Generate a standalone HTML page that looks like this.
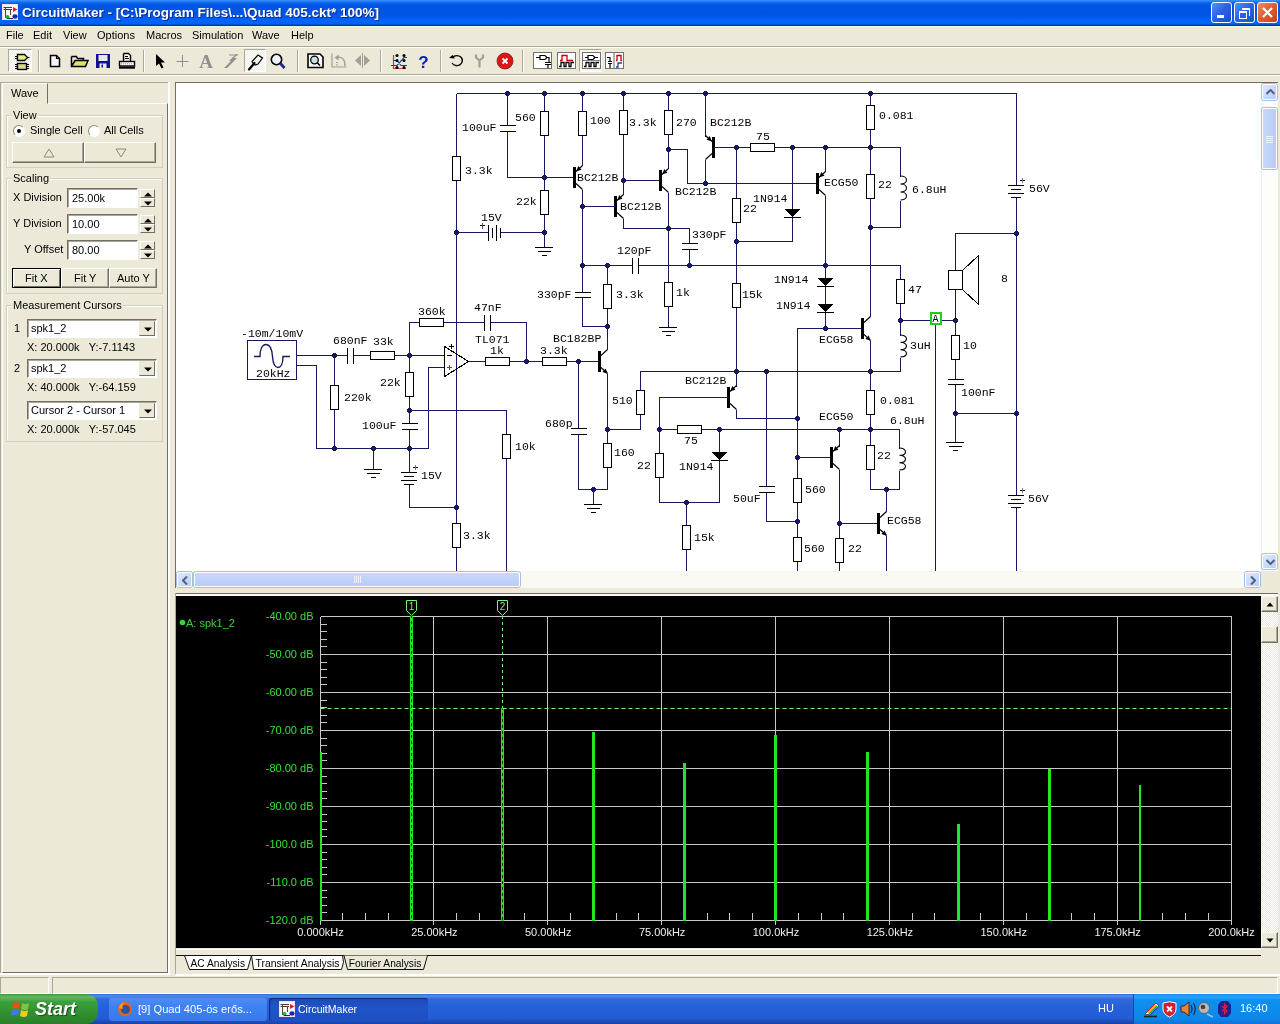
<!DOCTYPE html><html><head><meta charset="utf-8"><style>
*{margin:0;padding:0;box-sizing:border-box}
html,body{width:1280px;height:1024px;overflow:hidden;background:#ECE9D8;font-family:"Liberation Sans",sans-serif;font-size:11px;color:#000}
.a{position:absolute}
.t{position:absolute;white-space:nowrap;line-height:1}
.mono{font-family:"Liberation Mono",monospace}
</style></head><body><div class="a" style="left:0;top:0;width:1280px;height:1024px;will-change:transform">
<div class="a" style="left:0;top:0;width:1280px;height:26px;background:linear-gradient(#3D95FF 0px,#2B84F8 1px,#0A62EA 3px,#0055E5 6px,#0054E3 14px,#0058EE 17px,#0066FF 21px,#0062F8 24px,#0040B8 25px,#0030A0 26px)"></div>
<div class="a" style="left:0;top:26px;width:1280px;height:1px;background:#F4F2EA"></div>
<svg class="a" style="left:2px;top:4px" width="16" height="16" viewBox="0 0 16 16"><rect x="0" y="0" width="16" height="16" fill="#F4E0F0"/><rect x="1" y="1" width="14" height="14" fill="#FCF6FA"/><path d="M1.5 3.5 H10 M1.5 5.5 H10" stroke="#404030" stroke-width="1"/><path d="M3.5 3 V14 M8.5 5 V11" stroke="#504838" stroke-width="1"/><path d="M11 3 L15.5 5.5 L11 8Z" fill="#D02818"/><ellipse cx="13" cy="12.5" rx="2.6" ry="2.2" fill="#1828B0"/><circle cx="5.5" cy="13" r="2" fill="#20B040"/><path d="M5 14.5 H11" stroke="#303030"/></svg>
<div class="t" style="left:22px;top:6px;font-size:13.5px;font-weight:bold;color:#fff;text-shadow:1px 1px 0 #0a2a8a">CircuitMaker - [C:\Program Files\...\Quad 405.ckt* 100%]</div>
<div class="a" style="left:1211px;top:2px;width:21px;height:21px;border:1px solid #fff;border-radius:3px;background:linear-gradient(135deg,#5a8cf8,#2a60e8 50%,#1e4cd0)"><div class="a" style="left:5px;top:12px;width:7px;height:3px;background:#fff"></div></div>
<div class="a" style="left:1234px;top:2px;width:21px;height:21px;border:1px solid #fff;border-radius:3px;background:linear-gradient(135deg,#5a8cf8,#2a60e8 50%,#1e4cd0)"><div class="a" style="left:4px;top:8px;width:8px;height:8px;border:1px solid #fff;border-top-width:2px"></div><div class="a" style="left:7px;top:5px;width:8px;height:8px;border-top:2px solid #fff;border-right:1px solid #fff"></div></div>
<div class="a" style="left:1257px;top:2px;width:21px;height:21px;border:1px solid #fff;border-radius:3px;background:linear-gradient(135deg,#f08a6a,#e05a30 50%,#c8401a)"><svg class="a" style="left:3px;top:3px" width="13" height="13"><path d="M2 2L11 11M11 2L2 11" stroke="#fff" stroke-width="2.2"/></svg></div>
<div class="t" style="left:6px;top:30px;font-size:11px">File</div>
<div class="t" style="left:33px;top:30px;font-size:11px">Edit</div>
<div class="t" style="left:63px;top:30px;font-size:11px">View</div>
<div class="t" style="left:97px;top:30px;font-size:11px">Options</div>
<div class="t" style="left:146px;top:30px;font-size:11px">Macros</div>
<div class="t" style="left:192px;top:30px;font-size:11px">Simulation</div>
<div class="t" style="left:252px;top:30px;font-size:11px">Wave</div>
<div class="t" style="left:291px;top:30px;font-size:11px">Help</div>
<div class="a" style="left:0;top:46px;width:1280px;height:1px;background:#ACA899"></div>
<div class="a" style="left:0;top:47px;width:1280px;height:1px;background:#fff"></div>
<div class="a" style="left:0;top:74px;width:1280px;height:1px;background:#ACA899"></div>
<div class="a" style="left:0;top:75px;width:1280px;height:1px;background:#fff"></div>
<div class="a" style="left:38px;top:50px;width:1px;height:22px;background:#ACA899"></div><div class="a" style="left:39px;top:50px;width:1px;height:22px;background:#fff"></div>
<div class="a" style="left:143px;top:50px;width:1px;height:22px;background:#ACA899"></div><div class="a" style="left:144px;top:50px;width:1px;height:22px;background:#fff"></div>
<div class="a" style="left:297px;top:50px;width:1px;height:22px;background:#ACA899"></div><div class="a" style="left:298px;top:50px;width:1px;height:22px;background:#fff"></div>
<div class="a" style="left:380px;top:50px;width:1px;height:22px;background:#ACA899"></div><div class="a" style="left:381px;top:50px;width:1px;height:22px;background:#fff"></div>
<div class="a" style="left:440px;top:50px;width:1px;height:22px;background:#ACA899"></div><div class="a" style="left:441px;top:50px;width:1px;height:22px;background:#fff"></div>
<div class="a" style="left:522px;top:50px;width:1px;height:22px;background:#ACA899"></div><div class="a" style="left:523px;top:50px;width:1px;height:22px;background:#fff"></div>
<div class="a" style="left:8px;top:49px;width:24px;height:23px;border:1px solid;border-color:#ACA899 #fff #fff #ACA899;background:repeating-conic-gradient(#fff 0 25%,#EEEDE5 0 50%) 0 0/2px 2px"></div>
<div class="a" style="left:244px;top:49px;width:22px;height:23px;border:1px solid;border-color:#ACA899 #fff #fff #ACA899;background:repeating-conic-gradient(#fff 0 25%,#EEEDE5 0 50%) 0 0/2px 2px"></div>
<div class="a" style="left:579px;top:49px;width:23px;height:23px;border:1px solid;border-color:#ACA899 #fff #fff #ACA899;background:repeating-conic-gradient(#fff 0 25%,#EEEDE5 0 50%) 0 0/2px 2px"></div>
<svg class="a" style="left:0;top:0" width="640" height="80" viewBox="0 0 640 80"><path d="M17.5 54.5 H24.5 L27.5 57.5 L24.5 60.5 H17.5Z" fill="#E8F080" stroke="#000" stroke-width="1.4"/><path d="M15 56.5h2.5M15 58.5h2.5M27.5 57.5h2" stroke="#000" stroke-width="1.2"/><rect x="17.5" y="63.5" width="9" height="6" fill="#D8D890" stroke="#000" stroke-width="1.4"/><path d="M15 64.5h2.5M15 66.5h2.5M15 68.5h2.5M26.5 64.5h2.5M26.5 66.5h2.5M26.5 68.5h2.5" stroke="#000" stroke-width="1"/><path d="M50.5 55.5 H56.5 L59.5 58.5 V66.5 H50.5Z" fill="#F4F4F4" stroke="#000" stroke-width="1.5"/><path d="M56.5 55.5 V58.5 H59.5" fill="none" stroke="#000" stroke-width="1.2"/><path d="M71.5 56.5 H76.5 L77.5 58.5 H83.5 V60.5" fill="#E8E080" stroke="#000" stroke-width="1.5"/><path d="M71.5 56.5 V66.5 H85.5 L88 60.5 H75 L71.5 66.5" fill="#E4DC70" stroke="#000" stroke-width="1.5"/><rect x="96" y="54" width="14" height="14" fill="#101090"/><rect x="98.5" y="55" width="9" height="6" fill="#E8E8E8"/><rect x="99.5" y="63.5" width="7" height="4.5" fill="#E8E8E8"/><rect x="101.5" y="64.5" width="1.5" height="3" fill="#101090"/><path d="M123.5 53.5 H128.5 L130.5 55.5 V61" fill="#fff" stroke="#000" stroke-width="1.4"/><path d="M123.5 53.5 V61" stroke="#000" stroke-width="1.4"/><path d="M125 56.5h3M125 58.5h4" stroke="#000"/><rect x="119.5" y="61.5" width="15" height="4.5" fill="#fff" stroke="#000" stroke-width="1.4"/><path d="M121 63.8 H133" stroke="#888" stroke-dasharray="1,1"/><rect x="119" y="66.5" width="16" height="2.2" fill="#000"/><path d="M156 54 L156 66 L159 63.5 L161.5 68.5 L163.5 67.5 L161 62.5 L165 62.5Z" fill="#000"/><path d="M182.5 55 V67 M176.5 61.5 H188.5" stroke="#909090" stroke-width="1"/><text x="206" y="68" text-anchor="middle" font-family="Liberation Serif" font-size="19" font-weight="bold" fill="#909090">A</text><path d="M224 68 L231 61 L229 61 L236 54 L238 54 L234 58 L237 58 L227 68Z" fill="#909090"/><path d="M229 55 H238" stroke="#909090" stroke-width="1"/><path d="M249 69.5 L254.5 63" stroke="#000" stroke-width="2.2" stroke-linecap="round"/><path d="M253.5 64 L252 61.5 L258 55 L262.5 58 L258 64 L255.5 65Z" fill="none" stroke="#000" stroke-width="1.2"/><circle cx="276.5" cy="59.5" r="5.2" fill="#F0F4F8" stroke="#000" stroke-width="1.6"/><path d="M280.5 63.5 L284.5 68" stroke="#1a2a90" stroke-width="2.8"/><path d="M308 54 H320 L323 57 V67.5 H308Z" fill="#F8F8F8" stroke="#000" stroke-width="1.6"/><circle cx="314.5" cy="60" r="3.8" fill="#C8E0E0" stroke="#000" stroke-width="1.3"/><path d="M317 62.5 L320 65.5" stroke="#000" stroke-width="1.6"/><path d="M332 53.5 V67 H346.5" fill="none" stroke="#A0A098" stroke-width="1.2"/><path d="M337 57.5 Q345 56 345 66" fill="none" stroke="#A0A098" stroke-width="1.4"/><path d="M334.5 57.5 L338.5 54.5 L338.5 60.5Z" fill="#A0A098"/><path d="M336 62.5h2M336 65h2" stroke="#A0A098"/><path d="M355 60.5 L361 55 V66Z M370 60.5 L364 55 V66Z" fill="#A0A098"/><path d="M362.5 53 V68" stroke="#A0A098"/><path d="M393.5 55 V68.5 H406" fill="none" stroke="#C04040" stroke-width="1.2"/><path d="M391 65.5 H397 L404 57.5 H407 M393 60.5 H397 L401 65.5 H407" fill="none" stroke="#2040A0" stroke-width="1.2"/><circle cx="397" cy="55.5" r="1.5" fill="#000"/><circle cx="404" cy="55.5" r="1.5" fill="#000"/><circle cx="397" cy="60.5" r="1.5" fill="#000"/><circle cx="404" cy="60.5" r="1.5" fill="#000"/><circle cx="397" cy="67.5" r="1.5" fill="#000"/><circle cx="404" cy="67.5" r="1.5" fill="#000"/><text x="423.5" y="68" text-anchor="middle" font-family="Liberation Sans" font-size="17" font-weight="bold" fill="#1020B0">?</text><path d="M452.5 57.5 A5.5 5 0 1 1 452 63" fill="none" stroke="#000" stroke-width="1.4"/><path d="M449 58 L455 58.5 L452.5 55Z" fill="#000"/><path d="M476 54.5 V57.5 L479.5 60.5 V67.5 M483 54.5 V57.5 L479.5 60.5" stroke="#A0A098" stroke-width="2.2" fill="none"/><circle cx="505" cy="61" r="8" fill="#D81818"/><circle cx="505" cy="61" r="8" fill="none" stroke="#A01010" stroke-width="0.8"/><path d="M502.5 58.5 L507.5 63.5 M507.5 58.5 L502.5 63.5" stroke="#fff" stroke-width="1.8"/><rect x="533.5" y="52.5" width="18" height="16" fill="#fff" stroke="#707070"/><rect x="557.5" y="52.5" width="18" height="16" fill="#fff" stroke="#707070"/><rect x="582.5" y="52.5" width="18" height="16" fill="#fff" stroke="#707070"/><rect x="605.5" y="52.5" width="18" height="16" fill="#fff" stroke="#707070"/><path d="M536 57.5 H540 M540 55.5 H545 L547 57.5 L545 59.5 H540Z M547 57.5 H549 V62 M545 62.5 H551 M545 64.5 H551 M548 64.5 V68" fill="none" stroke="#000" stroke-width="1.2"/><path d="M560 60.5 H562 V55.5 H567 V60.5 H573" fill="none" stroke="#C00000" stroke-width="1.3"/><path d="M559 66.5 H561 V62.5 H564 V66.5 H566 V62.5 H569 V66.5 H571 V62.5 H574" fill="none" stroke="#000" stroke-width="1.3"/><path d="M585 57.5 H588 M588 55.5 H593 L595 57.5 L593 59.5 H588Z M595 57.5 H598" fill="none" stroke="#000" stroke-width="1.2"/><path d="M584 66.5 H586 V62.5 H589 V66.5 H591 V62.5 H594 V66.5 H596 V62.5 H599" fill="none" stroke="#000" stroke-width="1.3"/><path d="M583 60.5 H600" stroke="#8080A0"/><path d="M607 57.5 H610 V61.5 M608 61.5 H612 M608 63.5 H612 M610 63.5 V68" fill="none" stroke="#000" stroke-width="1.2"/><path d="M614 53 V68" stroke="#606060"/><path d="M616 60.5 H617 V55.5 H621 V60.5 H622" fill="none" stroke="#C00000" stroke-width="1.3"/><path d="M616 67 H618 V63 H622" fill="none" stroke="#2040A0" stroke-width="1.3"/></svg>
<div class="a" style="left:0;top:82px;width:1px;height:891px;background:#ACA899"></div>
<div class="a" style="left:0;top:82px;width:168px;height:1px;background:#ACA899"></div>
<div class="a" style="left:168px;top:82px;width:2px;height:893px;background:#fff"></div>
<div class="a" style="left:0;top:973px;width:170px;height:2px;background:#fff"></div>
<div class="a" style="left:2px;top:103px;width:166px;height:870px;border:1px solid;border-color:#fff #716F64 #716F64 #fff;background:#ECE9D8"></div>
<div class="a" style="left:2px;top:83px;width:46px;height:21px;border:1px solid;border-color:#fff #716F64 transparent #fff;background:#ECE9D8"></div>
<div class="t" style="left:11px;top:88px;font-size:11px">Wave</div>
<div class="a" style="left:6px;top:115px;width:157px;height:53px;border:1px solid #D0D0BF;box-shadow:1px 1px 0 #fff inset"></div>
<div class="t" style="left:12px;top:110px;font-size:11px;background:#ECE9D8;padding:0 1px">View</div>
<div class="a" style="left:13px;top:125px;width:12px;height:12px;border-radius:50%;border:1px solid #8C8C7C;border-color:#8C8C7C #fff #fff #8C8C7C;background:#fff"></div>
<div class="a" style="left:17px;top:129px;width:4px;height:4px;border-radius:50%;background:#000"></div>
<div class="t" style="left:30px;top:125px;font-size:11px">Single Cell</div>
<div class="a" style="left:88px;top:125px;width:12px;height:12px;border-radius:50%;border:1px solid #8C8C7C;border-color:#8C8C7C #fff #fff #8C8C7C;background:#fff"></div>
<div class="t" style="left:104px;top:125px;font-size:11px">All Cells</div>
<div class="a" style="left:12px;top:142px;width:72px;height:21px;border:1px solid;border-color:#fff #716F64 #716F64 #fff;box-shadow:inset -1px -1px 0 #ACA899"><svg class="a" style="left:30px;top:5px" width="12" height="10"><path d="M1 9 L6 1 L11 9Z" fill="none" stroke="#8C8C7C"/></svg></div>
<div class="a" style="left:84px;top:142px;width:72px;height:21px;border:1px solid;border-color:#fff #716F64 #716F64 #fff;box-shadow:inset -1px -1px 0 #ACA899"><svg class="a" style="left:30px;top:5px" width="12" height="10"><path d="M1 1 L6 9 L11 1Z" fill="none" stroke="#8C8C7C"/></svg></div>
<div class="a" style="left:6px;top:178px;width:157px;height:116px;border:1px solid #D0D0BF;box-shadow:1px 1px 0 #fff inset"></div>
<div class="t" style="left:12px;top:173px;font-size:11px;background:#ECE9D8;padding:0 1px">Scaling</div>
<div class="t" style="left:13px;top:192px;font-size:11px">X Division</div>
<div class="a" style="left:67px;top:188px;width:71px;height:20px;border:1px solid;border-color:#716F64 #fff #fff #716F64;box-shadow:inset 1px 1px 0 #ACA899;background:#fff"></div>
<div class="t" style="left:72px;top:193px;font-size:11px">25.00k</div>
<div class="a" style="left:140px;top:189px;width:15px;height:9px;border:1px solid;border-color:#fff #716F64 #716F64 #fff"><svg class="a" style="left:3px;top:2px" width="8" height="5"><path d="M0 4.5 L4 0.5 L8 4.5Z" fill="#000"/></svg></div>
<div class="a" style="left:140px;top:198px;width:15px;height:9px;border:1px solid;border-color:#fff #716F64 #716F64 #fff"><svg class="a" style="left:3px;top:2px" width="8" height="5"><path d="M0 0.5 L4 4.5 L8 0.5Z" fill="#000"/></svg></div>
<div class="t" style="left:13px;top:218px;font-size:11px">Y Division</div>
<div class="a" style="left:67px;top:214px;width:71px;height:20px;border:1px solid;border-color:#716F64 #fff #fff #716F64;box-shadow:inset 1px 1px 0 #ACA899;background:#fff"></div>
<div class="t" style="left:72px;top:219px;font-size:11px">10.00</div>
<div class="a" style="left:140px;top:215px;width:15px;height:9px;border:1px solid;border-color:#fff #716F64 #716F64 #fff"><svg class="a" style="left:3px;top:2px" width="8" height="5"><path d="M0 4.5 L4 0.5 L8 4.5Z" fill="#000"/></svg></div>
<div class="a" style="left:140px;top:224px;width:15px;height:9px;border:1px solid;border-color:#fff #716F64 #716F64 #fff"><svg class="a" style="left:3px;top:2px" width="8" height="5"><path d="M0 0.5 L4 4.5 L8 0.5Z" fill="#000"/></svg></div>
<div class="t" style="left:24px;top:244px;font-size:11px">Y Offset</div>
<div class="a" style="left:67px;top:240px;width:71px;height:20px;border:1px solid;border-color:#716F64 #fff #fff #716F64;box-shadow:inset 1px 1px 0 #ACA899;background:#fff"></div>
<div class="t" style="left:72px;top:245px;font-size:11px">80.00</div>
<div class="a" style="left:140px;top:241px;width:15px;height:9px;border:1px solid;border-color:#fff #716F64 #716F64 #fff"><svg class="a" style="left:3px;top:2px" width="8" height="5"><path d="M0 4.5 L4 0.5 L8 4.5Z" fill="#000"/></svg></div>
<div class="a" style="left:140px;top:250px;width:15px;height:9px;border:1px solid;border-color:#fff #716F64 #716F64 #fff"><svg class="a" style="left:3px;top:2px" width="8" height="5"><path d="M0 0.5 L4 4.5 L8 0.5Z" fill="#000"/></svg></div>
<div class="a" style="left:12px;top:268px;width:49px;height:20px;border:1px solid #000;box-shadow:inset 1px 1px 0 #fff,inset -1px -1px 0 #716F64"></div>
<div class="t" style="left:25px;top:273px;font-size:11px">Fit X</div>
<div class="a" style="left:61px;top:268px;width:48px;height:20px;border:1px solid;border-color:#fff #716F64 #716F64 #fff;box-shadow:inset -1px -1px 0 #ACA899"></div>
<div class="t" style="left:74px;top:273px;font-size:11px">Fit Y</div>
<div class="a" style="left:109px;top:268px;width:48px;height:20px;border:1px solid;border-color:#fff #716F64 #716F64 #fff;box-shadow:inset -1px -1px 0 #ACA899"></div>
<div class="t" style="left:117px;top:273px;font-size:11px">Auto Y</div>
<div class="a" style="left:6px;top:305px;width:157px;height:137px;border:1px solid #D0D0BF;box-shadow:1px 1px 0 #fff inset"></div>
<div class="t" style="left:12px;top:300px;font-size:11px;background:#ECE9D8;padding:0 1px">Measurement Cursors</div>
<div class="t" style="left:14px;top:323px;font-size:11px">1</div>
<div class="a" style="left:27px;top:319px;width:130px;height:19px;border:1px solid;border-color:#716F64 #fff #fff #716F64;box-shadow:inset 1px 1px 0 #ACA899;background:#fff"></div>
<div class="t" style="left:31px;top:323px;font-size:11px">spk1_2</div>
<div class="a" style="left:139px;top:321px;width:16px;height:15px;border:1px solid;border-color:#ECE9D8 #716F64 #716F64 #ECE9D8;background:#ECE9D8"><svg class="a" style="left:4px;top:5px" width="8" height="5"><path d="M0 0.5 L4 4.5 L8 0.5Z" fill="#000"/></svg></div>
<div class="t" style="left:27px;top:342px;font-size:11px">X: 20.000k&nbsp;&nbsp;&nbsp;Y:-7.1143</div>
<div class="t" style="left:14px;top:363px;font-size:11px">2</div>
<div class="a" style="left:27px;top:359px;width:130px;height:19px;border:1px solid;border-color:#716F64 #fff #fff #716F64;box-shadow:inset 1px 1px 0 #ACA899;background:#fff"></div>
<div class="t" style="left:31px;top:363px;font-size:11px">spk1_2</div>
<div class="a" style="left:139px;top:361px;width:16px;height:15px;border:1px solid;border-color:#ECE9D8 #716F64 #716F64 #ECE9D8;background:#ECE9D8"><svg class="a" style="left:4px;top:5px" width="8" height="5"><path d="M0 0.5 L4 4.5 L8 0.5Z" fill="#000"/></svg></div>
<div class="t" style="left:27px;top:382px;font-size:11px">X: 40.000k&nbsp;&nbsp;&nbsp;Y:-64.159</div>
<div class="a" style="left:27px;top:401px;width:130px;height:19px;border:1px solid;border-color:#716F64 #fff #fff #716F64;box-shadow:inset 1px 1px 0 #ACA899;background:#fff"></div>
<div class="t" style="left:31px;top:405px;font-size:11px">Cursor 2 - Cursor 1</div>
<div class="a" style="left:139px;top:403px;width:16px;height:15px;border:1px solid;border-color:#ECE9D8 #716F64 #716F64 #ECE9D8;background:#ECE9D8"><svg class="a" style="left:4px;top:5px" width="8" height="5"><path d="M0 0.5 L4 4.5 L8 0.5Z" fill="#000"/></svg></div>
<div class="t" style="left:27px;top:424px;font-size:11px">X: 20.000k&nbsp;&nbsp;&nbsp;Y:-57.045</div>
<div class="a" style="left:175px;top:82px;width:1103px;height:1px;background:#716F64"></div>
<div class="a" style="left:175px;top:82px;width:1px;height:506px;background:#716F64"></div>
<div class="a" style="left:176px;top:83px;width:1085px;height:488px;background:#fff"></div>
<div class="a" style="left:1261px;top:83px;width:17px;height:488px;background:#FDFDFA;border-left:1px solid #F0F0EA"></div>
<div class="a" style="left:1262px;top:84px;width:15px;height:16px;border-radius:2px;border:1px solid #fff;background:linear-gradient(135deg,#DCE8FE,#B8CFF8);box-shadow:0 0 0 1px #A8BEE8"><svg class="a" style="left:3px;top:4px" width="9" height="6"><path d="M0.5 5 L4.5 1 L8.5 5" fill="none" stroke="#4D6185" stroke-width="2"/></svg></div>
<div class="a" style="left:1262px;top:108px;width:15px;height:61px;border-radius:2px;border:1px solid #fff;background:linear-gradient(90deg,#C8D8FC,#B8CCF8);box-shadow:0 0 0 1px #A8BEE8"><svg class="a" style="left:3px;top:26px" width="8" height="8"><path d="M0 1.5H7M0 3.5H7M0 5.5H7M0 7.5H7" stroke="#EEF4FE"/></svg></div>
<div class="a" style="left:1262px;top:554px;width:15px;height:15px;border-radius:2px;border:1px solid #fff;background:linear-gradient(135deg,#DCE8FE,#B8CFF8);box-shadow:0 0 0 1px #A8BEE8"><svg class="a" style="left:3px;top:4px" width="9" height="6"><path d="M0.5 1 L4.5 5 L8.5 1" fill="none" stroke="#4D6185" stroke-width="2"/></svg></div>
<div class="a" style="left:176px;top:571px;width:1085px;height:17px;background:#FAF9F4"></div>
<div class="a" style="left:177px;top:572px;width:15px;height:15px;border-radius:2px;border:1px solid #fff;background:linear-gradient(135deg,#DCE8FE,#B8CFF8);box-shadow:0 0 0 1px #A8BEE8"><svg class="a" style="left:4px;top:3px" width="6" height="9"><path d="M5 0.5 L1 4.5 L5 8.5" fill="none" stroke="#4D6185" stroke-width="2"/></svg></div>
<div class="a" style="left:194px;top:572px;width:326px;height:15px;border-radius:2px;border:1px solid #fff;background:linear-gradient(#C8D8FC,#B8CCF8);box-shadow:0 0 0 1px #A8BEE8"><svg class="a" style="left:158px;top:3px" width="8" height="8"><path d="M1.5 0V7M3.5 0V7M5.5 0V7M7.5 0V7" stroke="#EEF4FE"/></svg></div>
<div class="a" style="left:1245px;top:572px;width:15px;height:15px;border-radius:2px;border:1px solid #fff;background:linear-gradient(135deg,#DCE8FE,#B8CFF8);box-shadow:0 0 0 1px #A8BEE8"><svg class="a" style="left:4px;top:3px" width="6" height="9"><path d="M1 0.5 L5 4.5 L1 8.5" fill="none" stroke="#4D6185" stroke-width="2"/></svg></div>
<div class="a" style="left:1261px;top:571px;width:17px;height:17px;background:#ECE9D8"></div>
<div class="a" style="left:175px;top:593px;width:1103px;height:1px;background:#716F64"></div>
<div class="a" style="left:175px;top:593px;width:1px;height:381px;background:#ACA899"></div>
<div class="a" style="left:176px;top:594px;width:1102px;height:2px;background:#FAFAF6"></div>
<div class="a" style="left:1261px;top:596px;width:17px;height:352px;background:repeating-conic-gradient(#fff 0 25%,#ECE9D8 0 50%) 0 0/2px 2px"></div>
<div class="a" style="left:1261px;top:596px;width:17px;height:16px;background:#ECE9D8;border:1px solid;border-color:#F8F8F4 #716F64 #716F64 #F8F8F4;box-shadow:inset -1px -1px 0 #ACA899"><svg class="a" style="left:4px;top:5px" width="8" height="5"><path d="M0.5 4.5 L4 0.5 L7.5 4.5Z" fill="#000"/></svg></div>
<div class="a" style="left:1261px;top:932px;width:17px;height:16px;background:#ECE9D8;border:1px solid;border-color:#F8F8F4 #716F64 #716F64 #F8F8F4;box-shadow:inset -1px -1px 0 #ACA899"><svg class="a" style="left:4px;top:5px" width="8" height="5"><path d="M0.5 0.5 L4 4.5 L7.5 0.5Z" fill="#000"/></svg></div>
<div class="a" style="left:1261px;top:626px;width:17px;height:17px;background:#ECE9D8;border:1px solid;border-color:#F8F8F4 #716F64 #716F64 #F8F8F4;box-shadow:inset -1px -1px 0 #ACA899"></div>
<svg class="a" style="left:176px;top:83px" width="1085" height="488" viewBox="176 83 1085 488"><g fill="none" stroke-width="1" shape-rendering="crispEdges"><path d="M456.5 93.5 L1016.5 93.5 L1016.5 185.5" stroke="#181862"/><circle cx="507.5" cy="93.5" r="2.6" fill="#181862"/><circle cx="544.5" cy="93.5" r="2.6" fill="#181862"/><circle cx="582.5" cy="93.5" r="2.6" fill="#181862"/><circle cx="623.5" cy="93.5" r="2.6" fill="#181862"/><circle cx="668.5" cy="93.5" r="2.6" fill="#181862"/><circle cx="705.5" cy="93.5" r="2.6" fill="#181862"/><circle cx="870.5" cy="93.5" r="2.6" fill="#181862"/><path d="M456.5 93.5 L456.5 600.5" stroke="#181862"/><rect x="452.5" y="156.5" width="8" height="24" fill="#fff" stroke="#000"/><circle cx="456.5" cy="232.5" r="2.6" fill="#181862"/><circle cx="456.5" cy="507.5" r="2.6" fill="#181862"/><path d="M507.5 93.5 L507.5 125.5" stroke="#181862"/><path d="M499.5 125.5 H515.5 M499.5 131.5 H515.5" stroke="#000"/><path d="M507.5 131.5 L507.5 177.5 L574.5 177.5" stroke="#181862"/><circle cx="544.5" cy="177.5" r="2.6" fill="#181862"/><path d="M544.5 93.5 L544.5 111.5" stroke="#181862"/><rect x="540.5" y="111.5" width="8" height="24" fill="#fff" stroke="#000"/><path d="M544.5 135.5 L544.5 190.5" stroke="#181862"/><rect x="540.5" y="190.5" width="8" height="24" fill="#fff" stroke="#000"/><path d="M544.5 214.5 L544.5 247.5" stroke="#181862"/><circle cx="544.5" cy="232.5" r="2.6" fill="#181862"/><path d="M535 247.5 H553 M538 251.5 H551 M542 255.5 H547" stroke="#000"/><path d="M456.5 232.5 L488.5 232.5" stroke="#181862"/><path d="M488.5 224.5 V240.5 M492.5 227.5 V237.5 M496.5 224.5 V240.5 M500.5 227.5 V237.5 " stroke="#000"/><path d="M480 225.5 H485 " stroke="#000"/><path d="M482.5 223 V229" stroke="#555"/><path d="M500.5 232.5 L544.5 232.5" stroke="#181862"/><path d="M582.5 93.5 L582.5 111.5" stroke="#181862"/><rect x="578.5" y="111.5" width="8" height="24" fill="#fff" stroke="#000"/><path d="M582.5 135.5 L582.5 165.5" stroke="#181862"/><rect x="573" y="167" width="3" height="21" fill="#000"/><path d="M576.0 171.5 L582.5 165.5" stroke="#000" stroke-width="1.1" fill="none" shape-rendering="geometricPrecision"/><path d="M576.0 183.5 L582.5 189.5" stroke="#000" stroke-width="1.1" fill="none" shape-rendering="geometricPrecision"/><path d="M576.2 171.3 L578.3 166.1 L581.5 169.7Z" fill="#000" shape-rendering="geometricPrecision"/><path d="M582.5 189.5 L582.5 265.5" stroke="#181862"/><circle cx="582.5" cy="206.5" r="2.6" fill="#181862"/><circle cx="582.5" cy="265.5" r="2.6" fill="#181862"/><path d="M623.5 93.5 L623.5 110.5" stroke="#181862"/><rect x="619.5" y="110.5" width="8" height="24" fill="#fff" stroke="#000"/><path d="M623.5 134.5 L623.5 194.5" stroke="#181862"/><circle cx="623.5" cy="180.5" r="2.6" fill="#181862"/><path d="M623.5 180.5 L660.5 180.5" stroke="#181862"/><rect x="614" y="196" width="3" height="21" fill="#000"/><path d="M617.0 200.5 L623.5 194.5" stroke="#000" stroke-width="1.1" fill="none" shape-rendering="geometricPrecision"/><path d="M617.0 212.5 L623.5 218.5" stroke="#000" stroke-width="1.1" fill="none" shape-rendering="geometricPrecision"/><path d="M617.2 200.3 L619.3 195.1 L622.5 198.7Z" fill="#000" shape-rendering="geometricPrecision"/><path d="M582.5 206.5 L615.5 206.5" stroke="#181862"/><path d="M623.5 218.5 L623.5 228.5 L689.5 228.5 L689.5 243.5" stroke="#181862"/><circle cx="668.5" cy="228.5" r="2.6" fill="#181862"/><path d="M668.5 93.5 L668.5 110.5" stroke="#181862"/><rect x="664.5" y="110.5" width="8" height="24" fill="#fff" stroke="#000"/><path d="M668.5 134.5 L668.5 168.5" stroke="#181862"/><circle cx="668.5" cy="149.5" r="2.6" fill="#181862"/><rect x="659" y="170" width="3" height="21" fill="#000"/><path d="M662.0 174.5 L668.5 168.5" stroke="#000" stroke-width="1.1" fill="none" shape-rendering="geometricPrecision"/><path d="M662.0 186.5 L668.5 192.5" stroke="#000" stroke-width="1.1" fill="none" shape-rendering="geometricPrecision"/><path d="M662.2 174.3 L664.3 169.1 L667.5 172.7Z" fill="#000" shape-rendering="geometricPrecision"/><path d="M668.5 192.5 L668.5 282.5" stroke="#181862"/><rect x="664.5" y="282.5" width="8" height="24" fill="#fff" stroke="#000"/><path d="M668.5 306.5 L668.5 327.5" stroke="#181862"/><path d="M659 327.5 H677 M662 331.5 H675 M666 335.5 H671" stroke="#000"/><path d="M668.5 149.5 L687.5 149.5 L687.5 183.5 L817.5 183.5" stroke="#181862"/><circle cx="705.5" cy="183.5" r="2.6" fill="#181862"/><path d="M681.5 243.5 H697.5 M681.5 249.5 H697.5" stroke="#000"/><path d="M689.5 249.5 L689.5 265.5" stroke="#181862"/><circle cx="689.5" cy="265.5" r="2.6" fill="#181862"/><path d="M705.5 93.5 L705.5 136.5" stroke="#181862"/><rect x="712" y="137" width="3" height="21" fill="#000"/><path d="M712.0 141.5 L705.5 135.5" stroke="#000" stroke-width="1.1" fill="none" shape-rendering="geometricPrecision"/><path d="M712.0 153.5 L705.5 159.5" stroke="#000" stroke-width="1.1" fill="none" shape-rendering="geometricPrecision"/><path d="M711.8 141.3 L706.5 139.7 L709.7 136.1Z" fill="#000" shape-rendering="geometricPrecision"/><path d="M705.5 159.5 L705.5 183.5" stroke="#181862"/><path d="M713.5 147.5 L750.5 147.5" stroke="#181862"/><rect x="750.5" y="143.5" width="24" height="8" fill="#fff" stroke="#000"/><path d="M774.5 147.5 L900.5 147.5 L900.5 176.5" stroke="#181862"/><circle cx="736.5" cy="147.5" r="2.6" fill="#181862"/><circle cx="792.5" cy="147.5" r="2.6" fill="#181862"/><circle cx="825.5" cy="147.5" r="2.6" fill="#181862"/><circle cx="870.5" cy="147.5" r="2.6" fill="#181862"/><path d="M736.5 147.5 L736.5 198.5" stroke="#181862"/><rect x="732.5" y="198.5" width="8" height="24" fill="#fff" stroke="#000"/><path d="M736.5 222.5 L736.5 283.5" stroke="#181862"/><circle cx="736.5" cy="241.5" r="2.6" fill="#181862"/><path d="M736.5 241.5 L792.5 241.5 L792.5 217.5" stroke="#181862"/><rect x="732.5" y="283.5" width="8" height="24" fill="#fff" stroke="#000"/><path d="M736.5 307.5 L736.5 386.5" stroke="#181862"/><circle cx="736.5" cy="371.5" r="2.6" fill="#181862"/><path d="M792.5 147.5 L792.5 209.5" stroke="#181862"/><path d="M784.5 209 H800.5 L792.5 217Z" fill="#000"/><path d="M784.0 217.5 H801.0" stroke="#000"/><path d="M825.5 147.5 L825.5 171.5" stroke="#181862"/><rect x="816" y="173" width="3" height="21" fill="#000"/><path d="M819.0 177.5 L825.5 171.5" stroke="#000" stroke-width="1.1" fill="none" shape-rendering="geometricPrecision"/><path d="M819.0 189.5 L825.5 195.5" stroke="#000" stroke-width="1.1" fill="none" shape-rendering="geometricPrecision"/><path d="M819.2 177.3 L821.3 172.1 L824.5 175.7Z" fill="#000" shape-rendering="geometricPrecision"/><path d="M825.5 195.5 L825.5 278.5" stroke="#181862"/><circle cx="825.5" cy="265.5" r="2.6" fill="#181862"/><path d="M817.5 278 H833.5 L825.5 286Z" fill="#000"/><path d="M817.0 286.5 H834.0" stroke="#000"/><path d="M825.5 286.5 L825.5 304.5" stroke="#181862"/><path d="M817.5 304 H833.5 L825.5 312Z" fill="#000"/><path d="M817.0 312.5 H834.0" stroke="#000"/><path d="M825.5 312.5 L825.5 328.5" stroke="#181862"/><circle cx="825.5" cy="328.5" r="2.6" fill="#181862"/><path d="M797.5 600.5 L797.5 328.5 L862.5 328.5" stroke="#181862"/><rect x="861" y="318" width="3" height="21" fill="#000"/><path d="M864.0 322.5 L870.5 316.5" stroke="#000" stroke-width="1.1" fill="none" shape-rendering="geometricPrecision"/><path d="M864.0 334.5 L870.5 340.5" stroke="#000" stroke-width="1.1" fill="none" shape-rendering="geometricPrecision"/><path d="M870.7 340.7 L865.4 339.1 L868.7 335.5Z" fill="#000" shape-rendering="geometricPrecision"/><path d="M870.5 93.5 L870.5 105.5" stroke="#181862"/><rect x="866.5" y="105.5" width="8" height="24" fill="#fff" stroke="#000"/><path d="M870.5 129.5 L870.5 174.5" stroke="#181862"/><rect x="866.5" y="174.5" width="8" height="24" fill="#fff" stroke="#000"/><path d="M870.5 198.5 L870.5 316.5" stroke="#181862"/><circle cx="870.5" cy="227.5" r="2.6" fill="#181862"/><path d="M870.5 227.5 L900.5 227.5 L900.5 200.5" stroke="#181862"/><path d="M900.5 176 c3 0 6 1.5 6 4.0 c0 2.5 -3 4.0 -6 4.0 c3 0 6 1.5 6 4.0 c0 2.5 -3 4.0 -6 4.0 c3 0 6 1.5 6 4.0 c0 2.5 -3 4.0 -6 4.0" fill="none" stroke="#000" stroke-width="1.1" shape-rendering="geometricPrecision"/><path d="M870.5 340.5 L870.5 390.5" stroke="#181862"/><circle cx="870.5" cy="371.5" r="2.6" fill="#181862"/><rect x="866.5" y="390.5" width="8" height="24" fill="#fff" stroke="#000"/><path d="M870.5 414.5 L870.5 445.5" stroke="#181862"/><circle cx="870.5" cy="429.5" r="2.6" fill="#181862"/><rect x="866.5" y="445.5" width="8" height="24" fill="#fff" stroke="#000"/><path d="M870.5 469.5 L870.5 489.5 L899.5 489.5 L899.5 470.5" stroke="#181862"/><circle cx="886.5" cy="489.5" r="2.6" fill="#181862"/><path d="M607.5 265.5 L632.5 265.5" stroke="#181862"/><path d="M632.5 257.5 V273.5 M638.5 257.5 V273.5" stroke="#000"/><path d="M638.5 265.5 L900.5 265.5 L900.5 279.5" stroke="#181862"/><rect x="896.5" y="279.5" width="8" height="24" fill="#fff" stroke="#000"/><path d="M900.5 303.5 L900.5 335.5" stroke="#181862"/><circle cx="900.5" cy="320.5" r="2.6" fill="#181862"/><path d="M900.5 335 c3 0 6 1.5 6 3.65 c0 2.5 -3 3.65 -6 3.65 c3 0 6 1.5 6 3.65 c0 2.5 -3 3.65 -6 3.65 c3 0 6 1.5 6 3.65 c0 2.5 -3 3.65 -6 3.65" fill="none" stroke="#000" stroke-width="1.1" shape-rendering="geometricPrecision"/><path d="M900.5 357.5 L900.5 371.5 L736.5 371.5" stroke="#181862"/><path d="M900.5 320.5 L930.5 320.5" stroke="#181862"/><path d="M941.5 320.5 L955.5 320.5" stroke="#181862"/><rect x="931" y="313" width="10" height="11" fill="#fff" stroke="#22CC22" stroke-width="2"/><path d="M935.5 324.5 L935.5 600.5" stroke="#181862"/><path d="M1016.5 233.5 L955.5 233.5 L955.5 270.5" stroke="#181862"/><rect x="948.5" y="270.5" width="14" height="19" fill="#fff" stroke="#000"/><path d="M962.5 270.5 L978.5 255.5 V304.5 L962.5 289.5" fill="none" stroke="#000"/><path d="M955.5 289.5 L955.5 335.5" stroke="#181862"/><circle cx="955.5" cy="320.5" r="2.6" fill="#181862"/><rect x="951.5" y="335.5" width="8" height="24" fill="#fff" stroke="#000"/><path d="M955.5 359.5 L955.5 379.5" stroke="#181862"/><path d="M947.5 379.5 H963.5 M947.5 384.5 H963.5" stroke="#000"/><path d="M955.5 384.5 L955.5 442.5" stroke="#181862"/><circle cx="955.5" cy="413.5" r="2.6" fill="#181862"/><path d="M946 442.5 H964 M949 446.5 H962 M953 450.5 H958" stroke="#000"/><path d="M955.5 413.5 L1016.5 413.5" stroke="#181862"/><circle cx="1016.5" cy="413.5" r="2.6" fill="#181862"/><circle cx="1016.5" cy="233.5" r="2.6" fill="#181862"/><path d="M1008 185.5 H1024 M1011 189.5 H1021 M1008 193.5 H1024 M1011 197.5 H1021 " stroke="#000"/><path d="M1020.0 180.5 H1025.0" stroke="#000"/><path d="M1022.5 178 V183" stroke="#777"/><path d="M1016.5 197.5 L1016.5 495.5" stroke="#181862"/><path d="M1008 495.5 H1024 M1011 499.5 H1021 M1008 503.5 H1024 M1011 507.5 H1021 " stroke="#000"/><path d="M1020.0 490.5 H1025.0" stroke="#000"/><path d="M1022.5 488 V493" stroke="#777"/><path d="M1016.5 507.5 L1016.5 600.5" stroke="#181862"/><rect x="247.5" y="340.5" width="49" height="39" fill="#fff" stroke="#181862" stroke-width="1.6"/><path d="M254 356.5 H260 C260 350 262 344.5 266 344.5 C270 344.5 272 350 272.5 356.5 C273 363 275 367.5 278 367.5 C281 367.5 283 363 283 356.5 H290" fill="none" stroke="#181862" stroke-width="1.4" shape-rendering="geometricPrecision"/><path d="M296.5 355.5 L347.5 355.5" stroke="#181862"/><circle cx="334.5" cy="355.5" r="2.6" fill="#181862"/><path d="M347.5 347.5 V363.5 M353.5 347.5 V363.5" stroke="#000"/><path d="M353.5 355.5 L370.5 355.5" stroke="#181862"/><rect x="370.5" y="351.5" width="24" height="8" fill="#fff" stroke="#000"/><path d="M394.5 355.5 L444.5 355.5" stroke="#181862"/><circle cx="409.5" cy="355.5" r="2.6" fill="#181862"/><path d="M296.5 365.5 L316.5 365.5 L316.5 448.5 L428.5 448.5 L428.5 367.5 L444.5 367.5" stroke="#181862"/><circle cx="334.5" cy="448.5" r="2.6" fill="#181862"/><circle cx="373.5" cy="448.5" r="2.6" fill="#181862"/><circle cx="409.5" cy="448.5" r="2.6" fill="#181862"/><path d="M334.5 355.5 L334.5 385.5" stroke="#181862"/><rect x="330.5" y="385.5" width="8" height="24" fill="#fff" stroke="#000"/><path d="M334.5 409.5 L334.5 448.5" stroke="#181862"/><path d="M373.5 448.5 L373.5 469.5" stroke="#181862"/><path d="M364 469.5 H382 M367 473.5 H380 M371 477.5 H376" stroke="#000"/><path d="M409.5 355.5 L409.5 372.5" stroke="#181862"/><rect x="405.5" y="372.5" width="8" height="24" fill="#fff" stroke="#000"/><path d="M409.5 396.5 L409.5 423.5" stroke="#181862"/><circle cx="409.5" cy="410.5" r="2.6" fill="#181862"/><path d="M401.5 423.5 H417.5 M401.5 429.5 H417.5" stroke="#000"/><path d="M409.5 429.5 L409.5 472.5" stroke="#181862"/><path d="M401 472.5 H417 M404 476.5 H414 M401 480.5 H417 M404 484.5 H414 " stroke="#000"/><path d="M413.0 467.5 H418.0" stroke="#000"/><path d="M415.5 465 V470" stroke="#777"/><path d="M409.5 484.5 L409.5 507.5 L456.5 507.5" stroke="#181862"/><rect x="452.5" y="523.5" width="8" height="24" fill="#fff" stroke="#000"/><path d="M409.5 410.5 L506.5 410.5 L506.5 434.5" stroke="#181862"/><rect x="502.5" y="434.5" width="8" height="24" fill="#fff" stroke="#000"/><path d="M506.5 458.5 L506.5 600.5" stroke="#181862"/><path d="M409.5 355.5 L409.5 322.5 L419.5 322.5" stroke="#181862"/><rect x="419.5" y="318.5" width="24" height="8" fill="#fff" stroke="#000"/><path d="M443.5 322.5 L484.5 322.5" stroke="#181862"/><path d="M484.5 314.5 V330.5 M490.5 314.5 V330.5" stroke="#000"/><path d="M490.5 322.5 L526.5 322.5 L526.5 361.5" stroke="#181862"/><circle cx="526.5" cy="361.5" r="2.6" fill="#181862"/><path d="M444.5 346.5 V376.5 L468.5 361.5Z" fill="none" stroke="#000" stroke-width="1.2"/><path d="M447 355.5 H452" stroke="#000"/><path d="M447 367.5 H452 M449.5 365 V370" stroke="#C02020"/><path d="M449 346.5 H454 M451.5 344 V349" stroke="#000"/><path d="M468.5 361.5 L485.5 361.5" stroke="#181862"/><rect x="485.5" y="357.5" width="24" height="8" fill="#fff" stroke="#000"/><path d="M509.5 361.5 L542.5 361.5" stroke="#181862"/><rect x="542.5" y="357.5" width="24" height="8" fill="#fff" stroke="#000"/><path d="M566.5 361.5 L599.5 361.5" stroke="#181862"/><circle cx="578.5" cy="361.5" r="2.6" fill="#181862"/><rect x="598" y="351" width="3" height="21" fill="#000"/><path d="M601.0 355.5 L607.5 349.5" stroke="#000" stroke-width="1.1" fill="none" shape-rendering="geometricPrecision"/><path d="M601.0 367.5 L607.5 373.5" stroke="#000" stroke-width="1.1" fill="none" shape-rendering="geometricPrecision"/><path d="M607.7 373.7 L602.4 372.1 L605.7 368.5Z" fill="#000" shape-rendering="geometricPrecision"/><path d="M607.5 349.5 L607.5 326.5 L582.5 326.5 L582.5 297.5" stroke="#181862"/><circle cx="607.5" cy="326.5" r="2.6" fill="#181862"/><path d="M582.5 265.5 L582.5 292.5" stroke="#181862"/><path d="M582.5 265.5 L607.5 265.5" stroke="#181862"/><path d="M574.5 292.5 H590.5 M574.5 297.5 H590.5" stroke="#000"/><path d="M607.5 326.5 L607.5 308.5" stroke="#181862"/><rect x="603.5" y="284.5" width="8" height="24" fill="#fff" stroke="#000"/><path d="M607.5 284.5 L607.5 265.5" stroke="#181862"/><circle cx="607.5" cy="265.5" r="2.6" fill="#181862"/><path d="M578.5 361.5 L578.5 428.5" stroke="#181862"/><path d="M570.5 428.5 H586.5 M570.5 434.5 H586.5" stroke="#000"/><path d="M578.5 434.5 L578.5 489.5 L607.5 489.5 L607.5 467.5" stroke="#181862"/><circle cx="593.5" cy="489.5" r="2.6" fill="#181862"/><path d="M593.5 489.5 L593.5 504.5" stroke="#181862"/><path d="M584 504.5 H602 M587 508.5 H600 M591 512.5 H596" stroke="#000"/><path d="M607.5 373.5 L607.5 443.5" stroke="#181862"/><circle cx="607.5" cy="429.5" r="2.6" fill="#181862"/><rect x="603.5" y="443.5" width="8" height="24" fill="#fff" stroke="#000"/><path d="M607.5 429.5 L640.5 429.5 L640.5 414.5" stroke="#181862"/><rect x="636.5" y="390.5" width="8" height="24" fill="#fff" stroke="#000"/><path d="M640.5 390.5 L640.5 371.5 L870.5 371.5" stroke="#181862"/><circle cx="766.5" cy="371.5" r="2.6" fill="#181862"/><rect x="727" y="387" width="3" height="21" fill="#000"/><path d="M730.0 391.5 L736.5 385.5" stroke="#000" stroke-width="1.1" fill="none" shape-rendering="geometricPrecision"/><path d="M730.0 403.5 L736.5 409.5" stroke="#000" stroke-width="1.1" fill="none" shape-rendering="geometricPrecision"/><path d="M730.2 391.3 L732.3 386.1 L735.5 389.7Z" fill="#000" shape-rendering="geometricPrecision"/><path d="M736.5 409.5 L736.5 418.5 L797.5 418.5" stroke="#181862"/><circle cx="797.5" cy="418.5" r="2.6" fill="#181862"/><path d="M728.5 397.5 L659.5 397.5 L659.5 453.5" stroke="#181862"/><circle cx="659.5" cy="429.5" r="2.6" fill="#181862"/><rect x="655.5" y="453.5" width="8" height="24" fill="#fff" stroke="#000"/><path d="M659.5 477.5 L659.5 502.5 L719.5 502.5 L719.5 460.5" stroke="#181862"/><circle cx="686.5" cy="502.5" r="2.6" fill="#181862"/><path d="M711.5 452 H727.5 L719.5 460Z" fill="#000"/><path d="M711.0 460.5 H728.0" stroke="#000"/><path d="M659.5 429.5 L677.5 429.5" stroke="#181862"/><rect x="677.5" y="425.5" width="24" height="8" fill="#fff" stroke="#000"/><path d="M701.5 429.5 L899.5 429.5 L899.5 448.5" stroke="#181862"/><circle cx="719.5" cy="429.5" r="2.6" fill="#181862"/><circle cx="839.5" cy="429.5" r="2.6" fill="#181862"/><path d="M719.5 429.5 L719.5 452.5" stroke="#181862"/><path d="M899.5 448 c3 0 6 1.5 6 3.65 c0 2.5 -3 3.65 -6 3.65 c3 0 6 1.5 6 3.65 c0 2.5 -3 3.65 -6 3.65 c3 0 6 1.5 6 3.65 c0 2.5 -3 3.65 -6 3.65" fill="none" stroke="#000" stroke-width="1.1" shape-rendering="geometricPrecision"/><path d="M686.5 502.5 L686.5 525.5" stroke="#181862"/><rect x="682.5" y="525.5" width="8" height="24" fill="#fff" stroke="#000"/><path d="M686.5 549.5 L686.5 600.5" stroke="#181862"/><path d="M766.5 371.5 L766.5 486.5" stroke="#181862"/><path d="M758.5 486.5 H774.5 M758.5 492.5 H774.5" stroke="#000"/><path d="M766.5 492.5 L766.5 521.5 L797.5 521.5" stroke="#181862"/><circle cx="797.5" cy="521.5" r="2.6" fill="#181862"/><circle cx="797.5" cy="457.5" r="2.6" fill="#181862"/><path d="M797.5 457.5 L831.5 457.5" stroke="#181862"/><rect x="793.5" y="478.5" width="8" height="24" fill="#fff" stroke="#000"/><rect x="793.5" y="537.5" width="8" height="24" fill="#fff" stroke="#000"/><path d="M839.5 429.5 L839.5 446.5" stroke="#181862"/><rect x="830" y="447" width="3" height="21" fill="#000"/><path d="M833.0 451.5 L839.5 445.5" stroke="#000" stroke-width="1.1" fill="none" shape-rendering="geometricPrecision"/><path d="M833.0 463.5 L839.5 469.5" stroke="#000" stroke-width="1.1" fill="none" shape-rendering="geometricPrecision"/><path d="M833.2 451.3 L835.3 446.1 L838.5 449.7Z" fill="#000" shape-rendering="geometricPrecision"/><path d="M839.5 469.5 L839.5 538.5" stroke="#181862"/><circle cx="839.5" cy="523.5" r="2.6" fill="#181862"/><path d="M839.5 523.5 L878.5 523.5" stroke="#181862"/><rect x="835.5" y="538.5" width="8" height="24" fill="#fff" stroke="#000"/><path d="M839.5 562.5 L839.5 600.5" stroke="#181862"/><rect x="877" y="513" width="3" height="21" fill="#000"/><path d="M880.0 517.5 L886.5 511.5" stroke="#000" stroke-width="1.1" fill="none" shape-rendering="geometricPrecision"/><path d="M880.0 529.5 L886.5 535.5" stroke="#000" stroke-width="1.1" fill="none" shape-rendering="geometricPrecision"/><path d="M886.7 535.7 L881.4 534.1 L884.7 530.5Z" fill="#000" shape-rendering="geometricPrecision"/><path d="M886.5 489.5 L886.5 511.5" stroke="#181862"/><path d="M886.5 535.5 L886.5 600.5" stroke="#181862"/></g></svg><svg class="a" style="left:176px;top:83px;will-change:transform" width="1085" height="488" viewBox="176 83 1085 488"><text x="465" y="174" font-family="Liberation Mono" font-size="11.5" fill="#000">3.3k</text><text x="462" y="131" font-family="Liberation Mono" font-size="11.5" fill="#000">100uF</text><text x="515" y="121" font-family="Liberation Mono" font-size="11.5" fill="#000">560</text><text x="516" y="205" font-family="Liberation Mono" font-size="11.5" fill="#000">22k</text><text x="481" y="221" font-family="Liberation Mono" font-size="11.5" fill="#000">15V</text><text x="590" y="124" font-family="Liberation Mono" font-size="11.5" fill="#000">100</text><text x="577" y="181" font-family="Liberation Mono" font-size="11.5" fill="#000">BC212B</text><text x="629" y="126" font-family="Liberation Mono" font-size="11.5" fill="#000">3.3k</text><text x="620" y="210" font-family="Liberation Mono" font-size="11.5" fill="#000">BC212B</text><text x="676" y="126" font-family="Liberation Mono" font-size="11.5" fill="#000">270</text><text x="675" y="195" font-family="Liberation Mono" font-size="11.5" fill="#000">BC212B</text><text x="676" y="296" font-family="Liberation Mono" font-size="11.5" fill="#000">1k</text><text x="692" y="238" font-family="Liberation Mono" font-size="11.5" fill="#000">330pF</text><text x="710" y="126" font-family="Liberation Mono" font-size="11.5" fill="#000">BC212B</text><text x="756" y="140" font-family="Liberation Mono" font-size="11.5" fill="#000">75</text><text x="743" y="212" font-family="Liberation Mono" font-size="11.5" fill="#000">22</text><text x="742" y="298" font-family="Liberation Mono" font-size="11.5" fill="#000">15k</text><text x="753" y="202" font-family="Liberation Mono" font-size="11.5" fill="#000">1N914</text><text x="824" y="186" font-family="Liberation Mono" font-size="11.5" fill="#000">ECG50</text><text x="774" y="283" font-family="Liberation Mono" font-size="11.5" fill="#000">1N914</text><text x="776" y="309" font-family="Liberation Mono" font-size="11.5" fill="#000">1N914</text><text x="819" y="343" font-family="Liberation Mono" font-size="11.5" fill="#000">ECG58</text><text x="879" y="119" font-family="Liberation Mono" font-size="11.5" fill="#000">0.081</text><text x="878" y="188" font-family="Liberation Mono" font-size="11.5" fill="#000">22</text><text x="912" y="193" font-family="Liberation Mono" font-size="11.5" fill="#000">6.8uH</text><text x="880" y="404" font-family="Liberation Mono" font-size="11.5" fill="#000">0.081</text><text x="877" y="459" font-family="Liberation Mono" font-size="11.5" fill="#000">22</text><text x="617" y="254" font-family="Liberation Mono" font-size="11.5" fill="#000">120pF</text><text x="908" y="293" font-family="Liberation Mono" font-size="11.5" fill="#000">47</text><text x="910" y="349" font-family="Liberation Mono" font-size="11.5" fill="#000">3uH</text><text x="932.5" y="322" font-family="Liberation Mono" font-size="10" fill="#000">A</text><text x="1001" y="282" font-family="Liberation Mono" font-size="11.5" fill="#000">8</text><text x="963" y="349" font-family="Liberation Mono" font-size="11.5" fill="#000">10</text><text x="961" y="396" font-family="Liberation Mono" font-size="11.5" fill="#000">100nF</text><text x="1029" y="192" font-family="Liberation Mono" font-size="11.5" fill="#000">56V</text><text x="1028" y="502" font-family="Liberation Mono" font-size="11.5" fill="#000">56V</text><text x="241" y="337" font-family="Liberation Mono" font-size="11.5" fill="#000">-10m/10mV</text><text x="256" y="377" font-family="Liberation Mono" font-size="11.5" fill="#000">20kHz</text><text x="333" y="344" font-family="Liberation Mono" font-size="11.5" fill="#000">680nF</text><text x="373" y="345" font-family="Liberation Mono" font-size="11.5" fill="#000">33k</text><text x="344" y="401" font-family="Liberation Mono" font-size="11.5" fill="#000">220k</text><text x="380" y="386" font-family="Liberation Mono" font-size="11.5" fill="#000">22k</text><text x="362" y="429" font-family="Liberation Mono" font-size="11.5" fill="#000">100uF</text><text x="421" y="479" font-family="Liberation Mono" font-size="11.5" fill="#000">15V</text><text x="463" y="539" font-family="Liberation Mono" font-size="11.5" fill="#000">3.3k</text><text x="515" y="450" font-family="Liberation Mono" font-size="11.5" fill="#000">10k</text><text x="418" y="315" font-family="Liberation Mono" font-size="11.5" fill="#000">360k</text><text x="474" y="311" font-family="Liberation Mono" font-size="11.5" fill="#000">47nF</text><text x="475" y="343" font-family="Liberation Mono" font-size="11.5" fill="#000">TL071</text><text x="490" y="354" font-family="Liberation Mono" font-size="11.5" fill="#000">1k</text><text x="540" y="354" font-family="Liberation Mono" font-size="11.5" fill="#000">3.3k</text><text x="553" y="342" font-family="Liberation Mono" font-size="11.5" fill="#000">BC182BP</text><text x="537" y="298" font-family="Liberation Mono" font-size="11.5" fill="#000">330pF</text><text x="616" y="298" font-family="Liberation Mono" font-size="11.5" fill="#000">3.3k</text><text x="545" y="427" font-family="Liberation Mono" font-size="11.5" fill="#000">680p</text><text x="614" y="456" font-family="Liberation Mono" font-size="11.5" fill="#000">160</text><text x="612" y="404" font-family="Liberation Mono" font-size="11.5" fill="#000">510</text><text x="685" y="384" font-family="Liberation Mono" font-size="11.5" fill="#000">BC212B</text><text x="637" y="469" font-family="Liberation Mono" font-size="11.5" fill="#000">22</text><text x="679" y="470" font-family="Liberation Mono" font-size="11.5" fill="#000">1N914</text><text x="684" y="444" font-family="Liberation Mono" font-size="11.5" fill="#000">75</text><text x="890" y="424" font-family="Liberation Mono" font-size="11.5" fill="#000">6.8uH</text><text x="694" y="541" font-family="Liberation Mono" font-size="11.5" fill="#000">15k</text><text x="733" y="502" font-family="Liberation Mono" font-size="11.5" fill="#000">50uF</text><text x="805" y="493" font-family="Liberation Mono" font-size="11.5" fill="#000">560</text><text x="804" y="552" font-family="Liberation Mono" font-size="11.5" fill="#000">560</text><text x="819" y="420" font-family="Liberation Mono" font-size="11.5" fill="#000">ECG50</text><text x="848" y="552" font-family="Liberation Mono" font-size="11.5" fill="#000">22</text><text x="887" y="524" font-family="Liberation Mono" font-size="11.5" fill="#000">ECG58</text></svg>
<svg class="a" style="left:176px;top:596px" width="1085" height="352" viewBox="176 596 1085 352" shape-rendering="crispEdges">
<rect x="176" y="596" width="1085" height="352" fill="#000"/>
<line x1="320.5" y1="616.5" x2="1231.5" y2="616.5" stroke="#C8C8C8" stroke-width="1"/>
<line x1="320.5" y1="654.5" x2="1231.5" y2="654.5" stroke="#C8C8C8" stroke-width="1"/>
<line x1="320.5" y1="692.5" x2="1231.5" y2="692.5" stroke="#C8C8C8" stroke-width="1"/>
<line x1="320.5" y1="730.5" x2="1231.5" y2="730.5" stroke="#C8C8C8" stroke-width="1"/>
<line x1="320.5" y1="768.5" x2="1231.5" y2="768.5" stroke="#C8C8C8" stroke-width="1"/>
<line x1="320.5" y1="806.5" x2="1231.5" y2="806.5" stroke="#C8C8C8" stroke-width="1"/>
<line x1="320.5" y1="844.5" x2="1231.5" y2="844.5" stroke="#C8C8C8" stroke-width="1"/>
<line x1="320.5" y1="882.5" x2="1231.5" y2="882.5" stroke="#C8C8C8" stroke-width="1"/>
<line x1="320.5" y1="920.5" x2="1231.5" y2="920.5" stroke="#C8C8C8" stroke-width="1"/>
<line x1="320.5" y1="616.5" x2="320.5" y2="924.5" stroke="#C8C8C8" stroke-width="1"/>
<line x1="433.5" y1="616.5" x2="433.5" y2="924.5" stroke="#C8C8C8" stroke-width="1"/>
<line x1="547.5" y1="616.5" x2="547.5" y2="924.5" stroke="#C8C8C8" stroke-width="1"/>
<line x1="661.5" y1="616.5" x2="661.5" y2="924.5" stroke="#C8C8C8" stroke-width="1"/>
<line x1="775.5" y1="616.5" x2="775.5" y2="924.5" stroke="#C8C8C8" stroke-width="1"/>
<line x1="889.5" y1="616.5" x2="889.5" y2="924.5" stroke="#C8C8C8" stroke-width="1"/>
<line x1="1003.5" y1="616.5" x2="1003.5" y2="924.5" stroke="#C8C8C8" stroke-width="1"/>
<line x1="1117.5" y1="616.5" x2="1117.5" y2="924.5" stroke="#C8C8C8" stroke-width="1"/>
<line x1="1231.5" y1="616.5" x2="1231.5" y2="924.5" stroke="#C8C8C8" stroke-width="1"/>
<line x1="320.5" y1="624.5" x2="327.0" y2="624.5" stroke="#C8C8C8"/>
<line x1="320.5" y1="631.5" x2="327.0" y2="631.5" stroke="#C8C8C8"/>
<line x1="320.5" y1="639.5" x2="327.0" y2="639.5" stroke="#C8C8C8"/>
<line x1="320.5" y1="646.5" x2="327.0" y2="646.5" stroke="#C8C8C8"/>
<line x1="320.5" y1="662.5" x2="327.0" y2="662.5" stroke="#C8C8C8"/>
<line x1="320.5" y1="669.5" x2="327.0" y2="669.5" stroke="#C8C8C8"/>
<line x1="320.5" y1="677.5" x2="327.0" y2="677.5" stroke="#C8C8C8"/>
<line x1="320.5" y1="684.5" x2="327.0" y2="684.5" stroke="#C8C8C8"/>
<line x1="320.5" y1="700.5" x2="327.0" y2="700.5" stroke="#C8C8C8"/>
<line x1="320.5" y1="707.5" x2="327.0" y2="707.5" stroke="#C8C8C8"/>
<line x1="320.5" y1="715.5" x2="327.0" y2="715.5" stroke="#C8C8C8"/>
<line x1="320.5" y1="722.5" x2="327.0" y2="722.5" stroke="#C8C8C8"/>
<line x1="320.5" y1="738.5" x2="327.0" y2="738.5" stroke="#C8C8C8"/>
<line x1="320.5" y1="745.5" x2="327.0" y2="745.5" stroke="#C8C8C8"/>
<line x1="320.5" y1="753.5" x2="327.0" y2="753.5" stroke="#C8C8C8"/>
<line x1="320.5" y1="760.5" x2="327.0" y2="760.5" stroke="#C8C8C8"/>
<line x1="320.5" y1="776.5" x2="327.0" y2="776.5" stroke="#C8C8C8"/>
<line x1="320.5" y1="783.5" x2="327.0" y2="783.5" stroke="#C8C8C8"/>
<line x1="320.5" y1="791.5" x2="327.0" y2="791.5" stroke="#C8C8C8"/>
<line x1="320.5" y1="798.5" x2="327.0" y2="798.5" stroke="#C8C8C8"/>
<line x1="320.5" y1="814.5" x2="327.0" y2="814.5" stroke="#C8C8C8"/>
<line x1="320.5" y1="821.5" x2="327.0" y2="821.5" stroke="#C8C8C8"/>
<line x1="320.5" y1="829.5" x2="327.0" y2="829.5" stroke="#C8C8C8"/>
<line x1="320.5" y1="836.5" x2="327.0" y2="836.5" stroke="#C8C8C8"/>
<line x1="320.5" y1="852.5" x2="327.0" y2="852.5" stroke="#C8C8C8"/>
<line x1="320.5" y1="859.5" x2="327.0" y2="859.5" stroke="#C8C8C8"/>
<line x1="320.5" y1="867.5" x2="327.0" y2="867.5" stroke="#C8C8C8"/>
<line x1="320.5" y1="874.5" x2="327.0" y2="874.5" stroke="#C8C8C8"/>
<line x1="320.5" y1="890.5" x2="327.0" y2="890.5" stroke="#C8C8C8"/>
<line x1="320.5" y1="897.5" x2="327.0" y2="897.5" stroke="#C8C8C8"/>
<line x1="320.5" y1="905.5" x2="327.0" y2="905.5" stroke="#C8C8C8"/>
<line x1="320.5" y1="912.5" x2="327.0" y2="912.5" stroke="#C8C8C8"/>
<line x1="342.5" y1="913.0" x2="342.5" y2="920.5" stroke="#C8C8C8"/>
<line x1="365.5" y1="913.0" x2="365.5" y2="920.5" stroke="#C8C8C8"/>
<line x1="388.5" y1="913.0" x2="388.5" y2="920.5" stroke="#C8C8C8"/>
<line x1="411.5" y1="913.0" x2="411.5" y2="920.5" stroke="#C8C8C8"/>
<line x1="456.5" y1="913.0" x2="456.5" y2="920.5" stroke="#C8C8C8"/>
<line x1="479.5" y1="913.0" x2="479.5" y2="920.5" stroke="#C8C8C8"/>
<line x1="502.5" y1="913.0" x2="502.5" y2="920.5" stroke="#C8C8C8"/>
<line x1="524.5" y1="913.0" x2="524.5" y2="920.5" stroke="#C8C8C8"/>
<line x1="570.5" y1="913.0" x2="570.5" y2="920.5" stroke="#C8C8C8"/>
<line x1="593.5" y1="913.0" x2="593.5" y2="920.5" stroke="#C8C8C8"/>
<line x1="616.5" y1="913.0" x2="616.5" y2="920.5" stroke="#C8C8C8"/>
<line x1="638.5" y1="913.0" x2="638.5" y2="920.5" stroke="#C8C8C8"/>
<line x1="684.5" y1="913.0" x2="684.5" y2="920.5" stroke="#C8C8C8"/>
<line x1="707.5" y1="913.0" x2="707.5" y2="920.5" stroke="#C8C8C8"/>
<line x1="729.5" y1="913.0" x2="729.5" y2="920.5" stroke="#C8C8C8"/>
<line x1="752.5" y1="913.0" x2="752.5" y2="920.5" stroke="#C8C8C8"/>
<line x1="798.5" y1="913.0" x2="798.5" y2="920.5" stroke="#C8C8C8"/>
<line x1="821.5" y1="913.0" x2="821.5" y2="920.5" stroke="#C8C8C8"/>
<line x1="843.5" y1="913.0" x2="843.5" y2="920.5" stroke="#C8C8C8"/>
<line x1="866.5" y1="913.0" x2="866.5" y2="920.5" stroke="#C8C8C8"/>
<line x1="912.5" y1="913.0" x2="912.5" y2="920.5" stroke="#C8C8C8"/>
<line x1="934.5" y1="913.0" x2="934.5" y2="920.5" stroke="#C8C8C8"/>
<line x1="957.5" y1="913.0" x2="957.5" y2="920.5" stroke="#C8C8C8"/>
<line x1="980.5" y1="913.0" x2="980.5" y2="920.5" stroke="#C8C8C8"/>
<line x1="1026.5" y1="913.0" x2="1026.5" y2="920.5" stroke="#C8C8C8"/>
<line x1="1048.5" y1="913.0" x2="1048.5" y2="920.5" stroke="#C8C8C8"/>
<line x1="1071.5" y1="913.0" x2="1071.5" y2="920.5" stroke="#C8C8C8"/>
<line x1="1094.5" y1="913.0" x2="1094.5" y2="920.5" stroke="#C8C8C8"/>
<line x1="1139.5" y1="913.0" x2="1139.5" y2="920.5" stroke="#C8C8C8"/>
<line x1="1162.5" y1="913.0" x2="1162.5" y2="920.5" stroke="#C8C8C8"/>
<line x1="1185.5" y1="913.0" x2="1185.5" y2="920.5" stroke="#C8C8C8"/>
<line x1="1208.5" y1="913.0" x2="1208.5" y2="920.5" stroke="#C8C8C8"/>
<text x="313.5" y="619.7" text-anchor="end" fill="#36E036" font-family="Liberation Sans" font-size="11">-40.00 dB</text>
<text x="313.5" y="657.7" text-anchor="end" fill="#36E036" font-family="Liberation Sans" font-size="11">-50.00 dB</text>
<text x="313.5" y="695.7" text-anchor="end" fill="#36E036" font-family="Liberation Sans" font-size="11">-60.00 dB</text>
<text x="313.5" y="733.7" text-anchor="end" fill="#36E036" font-family="Liberation Sans" font-size="11">-70.00 dB</text>
<text x="313.5" y="771.7" text-anchor="end" fill="#36E036" font-family="Liberation Sans" font-size="11">-80.00 dB</text>
<text x="313.5" y="809.7" text-anchor="end" fill="#36E036" font-family="Liberation Sans" font-size="11">-90.00 dB</text>
<text x="313.5" y="847.7" text-anchor="end" fill="#36E036" font-family="Liberation Sans" font-size="11">-100.0 dB</text>
<text x="313.5" y="885.7" text-anchor="end" fill="#36E036" font-family="Liberation Sans" font-size="11">-110.0 dB</text>
<text x="313.5" y="923.7" text-anchor="end" fill="#36E036" font-family="Liberation Sans" font-size="11">-120.0 dB</text>
<text x="320.5" y="936" text-anchor="middle" fill="#F0F0F0" font-family="Liberation Sans" font-size="11">0.000kHz</text>
<text x="434.375" y="936" text-anchor="middle" fill="#F0F0F0" font-family="Liberation Sans" font-size="11">25.00kHz</text>
<text x="548.25" y="936" text-anchor="middle" fill="#F0F0F0" font-family="Liberation Sans" font-size="11">50.00kHz</text>
<text x="662.125" y="936" text-anchor="middle" fill="#F0F0F0" font-family="Liberation Sans" font-size="11">75.00kHz</text>
<text x="776.0" y="936" text-anchor="middle" fill="#F0F0F0" font-family="Liberation Sans" font-size="11">100.0kHz</text>
<text x="889.875" y="936" text-anchor="middle" fill="#F0F0F0" font-family="Liberation Sans" font-size="11">125.0kHz</text>
<text x="1003.75" y="936" text-anchor="middle" fill="#F0F0F0" font-family="Liberation Sans" font-size="11">150.0kHz</text>
<text x="1117.625" y="936" text-anchor="middle" fill="#F0F0F0" font-family="Liberation Sans" font-size="11">175.0kHz</text>
<text x="1231.5" y="936" text-anchor="middle" fill="#F0F0F0" font-family="Liberation Sans" font-size="11">200.0kHz</text>
</svg>
<svg class="a" style="left:176px;top:596px" width="1085" height="352" viewBox="176 596 1085 352">
<rect x="320" y="752" width="2" height="169.0" fill="#22E622"/>
<rect x="410" y="616" width="3" height="305.0" fill="#22E622"/>
<rect x="501" y="708" width="3" height="213.0" fill="#22E622"/>
<rect x="592" y="732" width="3" height="189.0" fill="#22E622"/>
<rect x="683" y="763" width="3" height="158.0" fill="#22E622"/>
<rect x="774" y="735" width="3" height="186.0" fill="#22E622"/>
<rect x="866" y="752" width="3" height="169.0" fill="#22E622"/>
<rect x="957" y="824" width="3" height="97.0" fill="#22E622"/>
<rect x="1048" y="769" width="3" height="152.0" fill="#22E622"/>
<rect x="1139" y="785" width="2" height="136.0" fill="#22E622"/>
<line x1="411.5" y1="616" x2="411.5" y2="921" stroke="#0a3a0a" stroke-width="1" stroke-dasharray="3,3" stroke-dashoffset="1"/>
<path d="M406.5 600.5 H416.5 V610.5 L411.5 615.5 L406.5 610.5 Z" fill="none" stroke="#7CF07C" stroke-width="1"/>
<text x="411.5" y="609.5" text-anchor="middle" fill="#7CF07C" font-family="Liberation Sans" font-size="10">1</text>
<line x1="502.5" y1="616" x2="502.5" y2="708" stroke="#7CF07C" stroke-width="1" stroke-dasharray="3,3"/>
<line x1="502.5" y1="708" x2="502.5" y2="921" stroke="#0a3a0a" stroke-width="1" stroke-dasharray="3,3" stroke-dashoffset="1"/>
<path d="M497.5 600.5 H507.5 V610.5 L502.5 615.5 L497.5 610.5 Z" fill="none" stroke="#7CF07C" stroke-width="1"/>
<text x="502.5" y="609.5" text-anchor="middle" fill="#7CF07C" font-family="Liberation Sans" font-size="10">2</text>
<line x1="320.5" y1="708.5" x2="1231.5" y2="708.5" stroke="#7CF07C" stroke-width="1" stroke-dasharray="4,3"/>
<circle cx="182.5" cy="622.5" r="2.8" fill="#3CD23C"/><text x="186" y="627" fill="#3CD23C" font-family="Liberation Sans" font-size="11">A: spk1_2</text>
</svg>
<div class="a" style="left:176px;top:955px;width:1085px;height:1px;background:#000"></div>
<svg class="a" style="left:176px;top:948px" width="1090" height="28" viewBox="176 948 1090 28">
<rect x="176" y="949" width="1085" height="1" fill="#fff"/>
<path d="M176 955.5 H345 M427.5 955.5 H1261" stroke="#111" stroke-width="1"/>
<path d="M344 955.5 L347.5 969.5 H423.5 L427.5 955.5" fill="#ECE9D8" stroke="#111" stroke-width="1"/>
<path d="M251.5 955.5 L253.5 969.5 H341.5 Q345 962 342.5 955.5 Z" fill="#fff" stroke="#111" stroke-width="1"/>
<path d="M184.5 955.5 L189.5 969.5 H247.5 L251.5 955.5 Z" fill="#fff" stroke="#111" stroke-width="1"/>
<text x="190.5" y="966.5" font-family="Liberation Sans" font-size="11" textLength="54.5" lengthAdjust="spacingAndGlyphs">AC Analysis</text>
<text x="255.5" y="966.5" font-family="Liberation Sans" font-size="11" textLength="84" lengthAdjust="spacingAndGlyphs">Transient Analysis</text>
<text x="348.8" y="966.5" font-family="Liberation Sans" font-size="11" textLength="72.5" lengthAdjust="spacingAndGlyphs">Fourier Analysis</text>
</svg>
<div class="a" style="left:175px;top:974px;width:1105px;height:2px;background:#fff"></div>
<div class="a" style="left:0;top:977px;width:49px;height:17px;border:1px solid;border-color:#ACA899 #fff #fff #ACA899"></div>
<div class="a" style="left:52px;top:977px;width:1226px;height:17px;border:1px solid;border-color:#ACA899 #fff #fff #ACA899"></div>
<div class="a" style="left:0;top:994px;width:1280px;height:30px;background:linear-gradient(#3168D5 0px,#4993E6 2px,#2D6BDB 5px,#2560D8 14px,#245DD7 24px,#1941A5 30px)"></div>
<div class="a" style="left:0;top:994px;width:98px;height:30px;border-radius:0 12px 12px 0;background:linear-gradient(#3C9A3C 0px,#5EBA5E 3px,#3AA03A 8px,#2F8F2F 20px,#2A7F2A 30px)"></div>
<svg class="a" style="left:11px;top:1000px" width="20" height="19" viewBox="0 0 20 19"><path d="M2 3 Q5 1 9 3 L8 9 Q5 7 1 9Z" fill="#E8501A"/><path d="M11 3 Q14 5 18 3 L17 9 Q14 11 10 9Z" fill="#7CC83C"/><path d="M1 10 Q5 8 8 10 L7 16 Q4 14 0 16Z" fill="#3C78E8"/><path d="M10 10 Q13 12 17 10 L16 16 Q13 18 9 16Z" fill="#F8C81C"/></svg>
<div class="t" style="left:35px;top:1000px;font-size:18px;font-weight:bold;font-style:italic;color:#fff;text-shadow:1px 1px 1px #1a4a1a">Start</div>
<div class="a" style="left:109px;top:998px;width:158px;height:23px;border-radius:3px;background:linear-gradient(#4F8EF0,#3C81F3 40%,#3A7AEA)"></div>
<svg class="a" style="left:117px;top:1001px" width="16" height="16"><circle cx="8" cy="8" r="7" fill="#E8641C"/><circle cx="8.5" cy="8.5" r="4.5" fill="#3050A0"/><path d="M2 7 Q3 2 8 1 Q4 4 6 8Z" fill="#F8A020"/></svg>
<svg class="a" style="left:136px;top:1000px" width="125" height="18"><text x="2" y="13" font-family="Liberation Sans" font-size="11.5" fill="#fff" textLength="114" lengthAdjust="spacingAndGlyphs">[9] Quad 405-ös erős...</text></svg>
<div class="a" style="left:269px;top:998px;width:159px;height:23px;border-radius:3px;background:linear-gradient(#1E4AB8,#2052C8 40%,#1E50C4);box-shadow:inset 1px 1px 1px #102a80"></div>
<svg class="a" style="left:279px;top:1001px" width="16" height="16" viewBox="0 0 16 16"><rect x="0" y="0" width="16" height="16" fill="#F4E0F0"/><rect x="1" y="1" width="14" height="14" fill="#FCF6FA"/><path d="M1.5 3.5 H10 M1.5 5.5 H10" stroke="#404030" stroke-width="1"/><path d="M3.5 3 V14 M8.5 5 V11" stroke="#504838" stroke-width="1"/><path d="M11 3 L15.5 5.5 L11 8Z" fill="#D02818"/><ellipse cx="13" cy="12.5" rx="2.6" ry="2.2" fill="#1828B0"/><circle cx="5.5" cy="13" r="2" fill="#20B040"/><path d="M5 14.5 H11" stroke="#303030"/></svg>
<svg class="a" style="left:296px;top:1000px" width="70" height="18"><text x="2" y="13" font-family="Liberation Sans" font-size="11.5" fill="#fff" textLength="59" lengthAdjust="spacingAndGlyphs">CircuitMaker</text></svg>
<div class="a" style="left:1133px;top:994px;width:147px;height:30px;background:linear-gradient(#1A8CF0 0px,#2CA4F8 3px,#0F90EE 6px,#0C88E8 24px,#1070D8 30px);border-left:1px solid #0A4AB0"></div>
<div class="t" style="left:1098px;top:1003px;font-size:11px;color:#fff">HU</div>
<div class="t" style="left:1240px;top:1003px;font-size:11px;color:#fff">16:40</div>
<svg class="a" style="left:1140px;top:999px" width="96" height="20" viewBox="1140 999 96 20"><path d="M1145 1014 L1156 1003 L1159 1006 L1150 1015Z" fill="#fff" stroke="#333" stroke-width="0.8"/><path d="M1147 1012 L1155 1004" stroke="#E02020" stroke-width="1.3"/><path d="M1148 1013 L1156 1005" stroke="#F0C000" stroke-width="1.3"/><path d="M1149 1014 L1157 1006" stroke="#20A020" stroke-width="1.3"/><path d="M1150 1015 L1158 1007" stroke="#2040E0" stroke-width="1.3"/><path d="M1144 1016.5 H1157" stroke="#222" stroke-width="1.6"/><path d="M1163 1003 Q1169.5 1000.5 1176 1003 V1009 Q1176 1014 1169.5 1017 Q1163 1014 1163 1009Z" fill="#D02030" stroke="#fff" stroke-width="1"/><path d="M1167 1006.5 L1172 1011.5 M1172 1006.5 L1167 1011.5" stroke="#fff" stroke-width="1.8"/><path d="M1181 1006 H1184 L1189 1002 V1016 L1184 1012 H1181Z" fill="#F08030" stroke="#302020" stroke-width="0.9"/><path d="M1191 1005 Q1193 1009 1191 1013 M1193.5 1003 Q1197 1009 1193.5 1015" stroke="#202030" fill="none" stroke-width="1.1"/><circle cx="1204" cy="1008" r="5.5" fill="#B8B8B8" stroke="#606060" stroke-width="0.9"/><circle cx="1203" cy="1007" r="2.3" fill="#404040"/><path d="M1207 1014 L1213 1017" stroke="#A0C0E0" stroke-width="1.5"/><path d="M1221 1001 H1228 L1231 1005 V1013 L1228 1017 H1221 L1218 1013 V1005Z" fill="#1C2490"/><path d="M1222 1006 L1227 1011 L1224.5 1013.5 V1004 L1227 1006.5 L1222 1011.5" stroke="#E02030" fill="none" stroke-width="1.2"/></svg>
</div></body></html>
